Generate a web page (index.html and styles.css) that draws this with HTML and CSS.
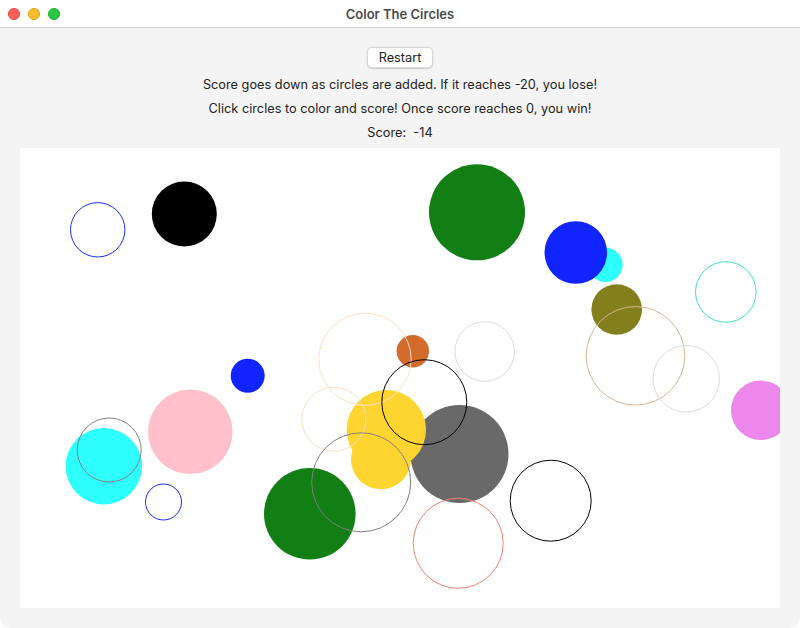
FILE: index.html
```html
<!DOCTYPE html>
<html>
<head>
<meta charset="utf-8">
<title>Color The Circles</title>
<link rel="stylesheet" href="styles.css">
</head>
<body>
<div class="window">
  <div class="titlebar">
    <div class="lights">
      <span class="light red"></span>
      <span class="light yellow"></span>
      <span class="light green"></span>
    </div>
    <div class="title">Color The Circles</div>
  </div>
  <div class="content">
    <button class="restart">Restart</button>
    <div class="line">Score goes down as circles are added. If it reaches -20, you lose!</div>
    <div class="line">Click circles to color and score! Once score reaches 0, you win!</div>
    <div class="line score">Score:  -14</div>
    <div class="canvas">
      <svg width="760" height="460" viewBox="0 0 760 460">
        <g class="filled">
          <circle cx="164.3" cy="66" r="32.5" fill="#000000"/>
          <circle cx="457" cy="64.3" r="48" fill="#117f14"/>
          <circle cx="585.5" cy="116.8" r="17.2" fill="#2efffe"/>
          <circle cx="555.8" cy="104.5" r="31.3" fill="#1024ff"/>
          <circle cx="596.7" cy="161.5" r="25.3" fill="#837f1d"/>
          <circle cx="392.8" cy="203.2" r="16.2" fill="#d26b2c"/>
          <circle cx="740.7" cy="262.3" r="29.7" fill="#ec87ec"/>
          <circle cx="227.7" cy="227.7" r="17" fill="#1024ff"/>
          <circle cx="439.5" cy="306" r="49" fill="#696969"/>
          <circle cx="366.3" cy="281.7" r="39.7" fill="#fed530"/>
          <circle cx="361" cy="311.3" r="30" fill="#fed530"/>
          <circle cx="289.8" cy="365.8" r="45.8" fill="#117f14"/>
          <circle cx="170.3" cy="283.8" r="42.3" fill="#ffc0cb"/>
          <circle cx="83.8" cy="318.2" r="38.2" fill="#2efffe"/>
        </g>
        <g class="outlined" fill="none" stroke-width="1">
          <circle cx="77.7" cy="81.8" r="27.2" stroke="#1a2cff"/>
          <circle cx="705.8" cy="144" r="30.3" stroke="#40e0d0"/>
          <circle cx="615.5" cy="207.8" r="49.3" stroke="#d9b68c"/>
          <circle cx="666.2" cy="230.8" r="33.3" stroke="#dcdcdc"/>
          <circle cx="464.7" cy="203.5" r="29.8" stroke="#dcdcdc"/>
          <circle cx="345" cy="211.3" r="46.2" stroke="#ffe2bd"/>
          <circle cx="404.3" cy="254.2" r="42.5" stroke="#000000"/>
          <circle cx="313.8" cy="271.2" r="32" stroke="#ffdcc0"/>
          <circle cx="341.2" cy="334.3" r="49.5" stroke="#808080"/>
          <circle cx="89.2" cy="302" r="32" stroke="#808080"/>
          <circle cx="143.5" cy="354" r="18" stroke="#1a2cff"/>
          <circle cx="438.2" cy="395.3" r="45" stroke="#fa8072"/>
          <circle cx="530.7" cy="352.7" r="40.5" stroke="#000000"/>
        </g>
      </svg>
    </div>
  </div>
</div>
</body>
</html>
```

FILE: styles.css
```css
html, body {
  margin: 0;
  padding: 0;
  background: #ffffff;
}

.window {
  width: 800px;
  height: 628px;
  box-sizing: border-box;
  background: #f4f4f4;
  border-radius: 0 0 10px 10px;
  overflow: hidden;
  font-family: Inter, "Liberation Sans", Arial, sans-serif;
  font-size: 13px;
  color: #222222;
}

.titlebar {
  position: relative;
  height: 27px;
  background: #ffffff;
  border-bottom: 1px solid #d3d3d3;
  display: flex;
  align-items: center;
  justify-content: center;
}

.lights {
  position: absolute;
  left: 8px;
  top: 8px;
  display: flex;
  gap: 8px;
}

.light {
  width: 12px;
  height: 12px;
  border-radius: 50%;
  box-sizing: border-box;
}

.light.red { background: #fe5f57; border: 0.5px solid #e2463f; }
.light.yellow { background: #febc2e; border: 0.5px solid #e1a116; }
.light.green { background: #28c840; border: 0.5px solid #14ae2a; }

.title {
  font-weight: 600;
  font-size: 13px;
  color: #4a4a4a;
  line-height: 16px;
  margin-top: 1px;
}

.content {
  display: flex;
  flex-direction: column;
  align-items: center;
  gap: 8px;
  padding-top: 19px;
}

.restart {
  height: 21px;
  width: 66px;
  padding: 0;
  font-family: Inter, "Liberation Sans", Arial, sans-serif;
  font-size: 12.75px;
  color: #222222;
  background: #ffffff;
  border: 0.5px solid #d8d8d8;
  border-radius: 5px;
  box-shadow: 0 0.5px 1.5px rgba(0, 0, 0, 0.18);
  line-height: 19px;
}

.line {
  font-size: 12.75px;
  line-height: 16px;
  height: 15px;
  padding-top: 1px;
  white-space: pre;
}

.canvas {
  width: 760px;
  height: 460px;
  background: #ffffff;
  overflow: hidden;
}

.canvas svg {
  display: block;
}
```
